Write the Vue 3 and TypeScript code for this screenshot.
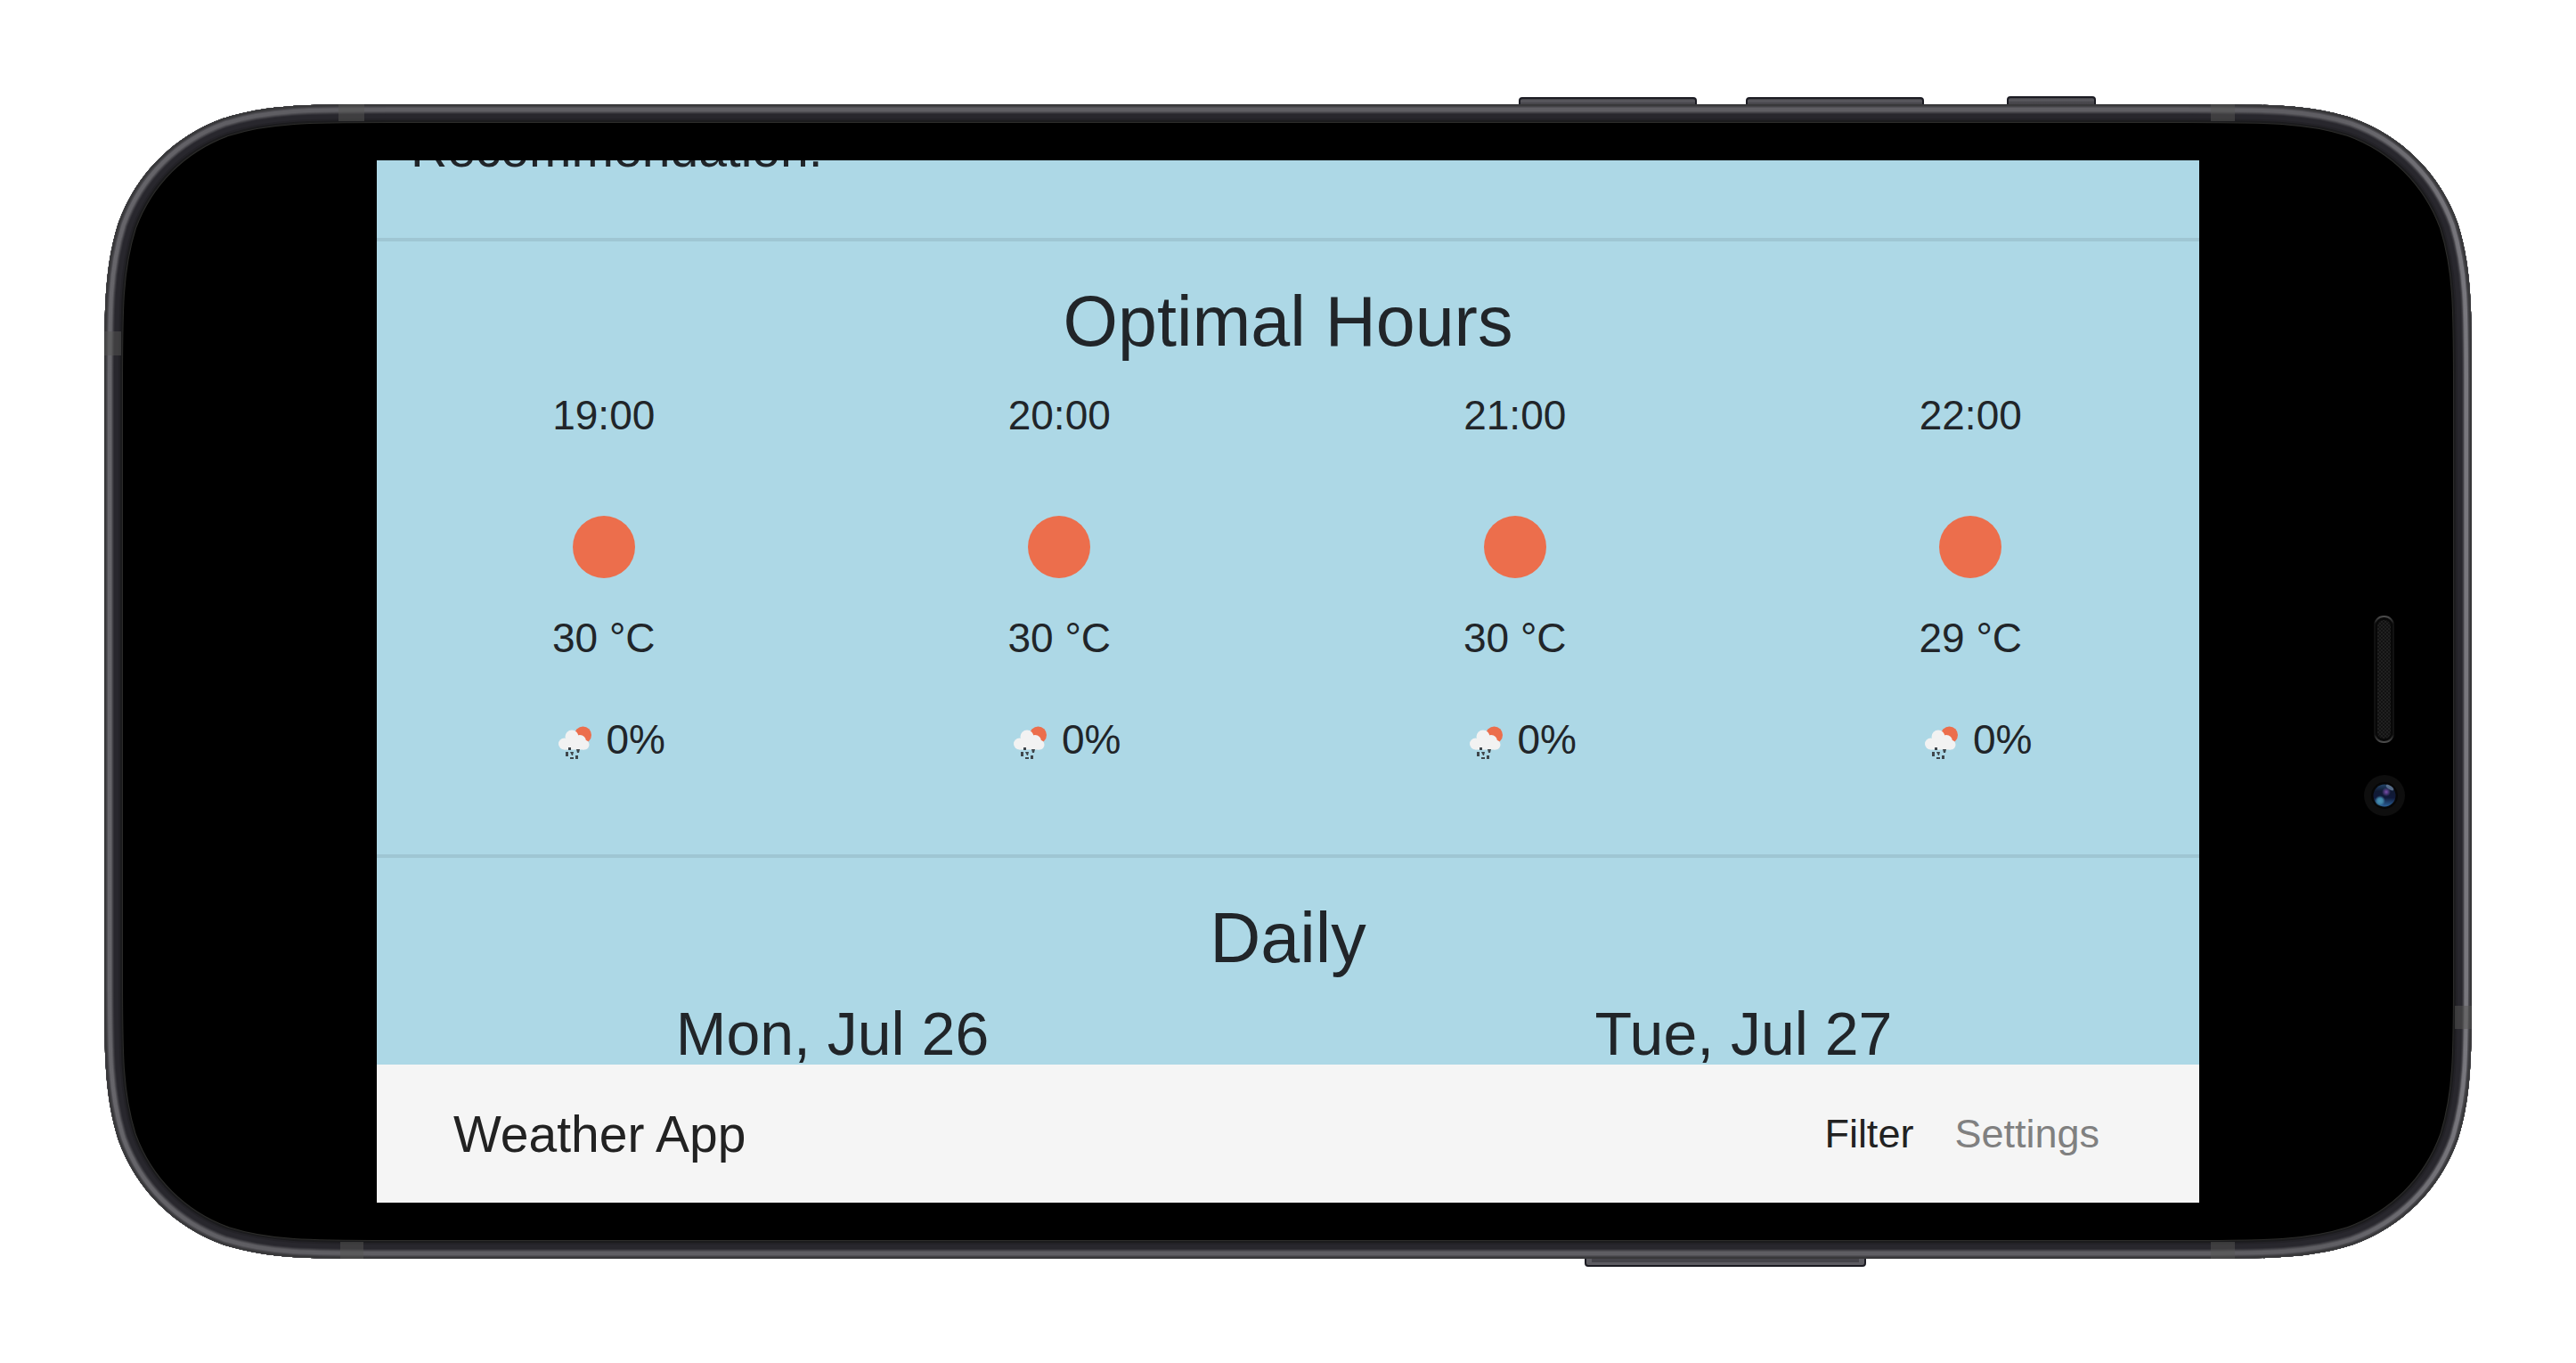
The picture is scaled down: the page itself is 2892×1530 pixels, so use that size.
<script setup lang="ts">
interface Hour {
  time: string
  temperature: string
  rain: string
}

interface RimLayer {
  depth: number
  color: string
}

const hours: Hour[] = [
  { time: '19:00', temperature: '30 °C', rain: '0%' },
  { time: '20:00', temperature: '30 °C', rain: '0%' },
  { time: '21:00', temperature: '30 °C', rain: '0%' },
  { time: '22:00', temperature: '29 °C', rain: '0%' },
]

const days: string[] = ['Mon, Jul 26', 'Tue, Jul 27']

// Rim of the handset, from the innermost ring to the outer edge
const rim: RimLayer[] = [
  { depth: 21, color: '#2c2c2a' },
  { depth: 20, color: '#1b1b1d' },
  { depth: 18, color: '#232227' },
  { depth: 16, color: '#28272d' },
  { depth: 11, color: '#333238' },
  { depth: 10, color: '#434247' },
  { depth: 9, color: 'url(#rim-mid)' },
  { depth: 8, color: 'url(#rim-light)' },
  { depth: 4, color: '#515055' },
  { depth: 3, color: '#434246' },
  { depth: 2, color: '#38383a' },
]

// Rounded rectangle with continuous-curvature corners
function squircle(w: number, h: number, r: number): string {
  const k = [1.528, 1.088, 0.868, 0.631, 0.372, 0.169, 0.075].map((n) => Math.round(n * r))
  const [a, b, c, d, e, f, g] = k
  return [
    `M${a} 0H${w - a}`,
    `C${w - b} 0 ${w - c} 0 ${w - d} ${g}C${w - e} ${f} ${w - f} ${e} ${w - g} ${d}C${w} ${c} ${w} ${b} ${w} ${a}`,
    `V${h - a}`,
    `C${w} ${h - b} ${w} ${h - c} ${w - g} ${h - d}C${w - f} ${h - e} ${w - e} ${h - f} ${w - d} ${h - g}C${w - c} ${h} ${w - b} ${h} ${w - a} ${h}`,
    `H${a}`,
    `C${b} ${h} ${c} ${h} ${d} ${h - g}C${e} ${h - f} ${f} ${h - e} ${g} ${h - d}C0 ${h - c} 0 ${h - b} 0 ${h - a}`,
    `V${a}`,
    `C0 ${b} 0 ${c} ${g} ${d}C${f} ${e} ${e} ${f} ${d} ${g}C${c} 0 ${b} 0 ${a} 0Z`,
  ].join('')
}

const outline = squircle(2658, 1296, 211)
</script>

<template>
  <div class="stage">
    <div class="phone">
      <svg class="shell" viewBox="0 0 2658 1296" aria-hidden="true">
        <defs>
          <clipPath id="body-clip"><path :d="outline" /></clipPath>
          <linearGradient id="rim-light" gradientUnits="userSpaceOnUse" x1="0" y1="0" x2="2658" y2="0">
            <stop offset="0" stop-color="#67666b" />
            <stop offset="0.06" stop-color="#5f5e63" />
            <stop offset="0.94" stop-color="#5f5e63" />
            <stop offset="1" stop-color="#79787e" />
          </linearGradient>
          <linearGradient id="rim-mid" gradientUnits="userSpaceOnUse" x1="0" y1="0" x2="2658" y2="0">
            <stop offset="0" stop-color="#57565b" />
            <stop offset="0.06" stop-color="#525156" />
            <stop offset="0.94" stop-color="#525156" />
            <stop offset="1" stop-color="#66656b" />
          </linearGradient>
          <linearGradient id="key" x1="0" y1="0" x2="0" y2="1">
            <stop offset="0" stop-color="#2f2f33" />
            <stop offset="0.15" stop-color="#5d5c62" />
            <stop offset="0.3" stop-color="#48474c" />
            <stop offset="1" stop-color="#38373c" />
          </linearGradient>
          <pattern id="mesh" width="4" height="4" patternUnits="userSpaceOnUse">
            <rect width="4" height="4" fill="#121212" />
            <rect width="2" height="2" fill="#202020" />
            <rect x="2" y="2" width="2" height="2" fill="#202020" />
          </pattern>
          <linearGradient id="slot" x1="0" y1="0" x2="0" y2="1">
            <stop offset="0" stop-color="#4c4c4c" />
            <stop offset="0.06" stop-color="#111111" />
            <stop offset="0.94" stop-color="#111111" />
            <stop offset="1" stop-color="#4c4c4c" />
          </linearGradient>
          <linearGradient id="lens" x1="0" y1="0" x2="0" y2="1">
            <stop offset="0" stop-color="#234468" />
            <stop offset="0.3" stop-color="#101a33" />
            <stop offset="0.6" stop-color="#10193a" />
            <stop offset="1" stop-color="#2b639a" />
          </linearGradient>
          <radialGradient id="glow-violet">
            <stop offset="0" stop-color="#7a4fae" />
            <stop offset="1" stop-color="#7a4fae" stop-opacity="0" />
          </radialGradient>
          <radialGradient id="glow-cyan">
            <stop offset="0" stop-color="#4a93b4" />
            <stop offset="0.5" stop-color="#3f83a6" />
            <stop offset="1" stop-color="#3f83a6" stop-opacity="0" />
          </radialGradient>
        </defs>

        <g fill="url(#key)" stroke="#1b1b22" stroke-width="2">
          <rect x="1589" y="-7" width="198" height="20" rx="3" />
          <rect x="1844" y="-7" width="198" height="20" rx="3" />
          <rect x="2137" y="-8" width="98" height="20" rx="3" />
        </g>
        <g stroke="#1b1b22" stroke-width="2">
          <rect x="1663" y="1285" width="314" height="19" rx="3" fill="#5d5c62" />
          <rect x="1670" y="1290" width="300" height="10" fill="#45444a" stroke="none" />
        </g>

        <path :d="outline" fill="#000" />
        <g clip-path="url(#body-clip)">
          <path
            v-for="layer in rim"
            :key="layer.depth"
            :d="outline"
            fill="none"
            :stroke="layer.color"
            :stroke-width="layer.depth * 2"
          />
          <g fill="#555553" fill-opacity="0.5">
            <rect x="263" y="0" width="29" height="19" />
            <rect x="2365" y="0" width="27" height="19" />
            <rect x="265" y="1277" width="26" height="19" />
            <rect x="2365" y="1277" width="27" height="19" />
            <rect x="0" y="255" width="19" height="27" />
            <rect x="2639" y="1012" width="19" height="26" />
          </g>
        </g>

        <rect x="2549" y="575" width="21" height="141" rx="10" fill="#080808" stroke="url(#slot)" stroke-width="2" />
        <rect x="2552" y="579" width="15" height="133" rx="7" fill="url(#mesh)" />
        <circle cx="2560" cy="776" r="23" fill="#0e0e0e" />
        <circle cx="2560" cy="776" r="15" fill="#060606" />
        <circle cx="2560" cy="776" r="12.5" fill="url(#lens)" />
        <ellipse cx="2566" cy="767" rx="5" ry="2" transform="rotate(35 2566 767)" fill="#7d93b0" fill-opacity="0.6" />
        <circle cx="2562" cy="772" r="5" fill="url(#glow-violet)" />
        <circle cx="2555" cy="782" r="6" fill="url(#glow-cyan)" />
      </svg>

      <div class="screen">
        <main class="viewport">
          <div class="scrolled">
            <p class="recommendation">Recommendation:</p>

            <section class="panel">
              <h2>Optimal Hours</h2>
              <div class="hours">
                <article v-for="hour in hours" :key="hour.time" class="hour">
                  <p>{{ hour.time }}</p>
                  <svg class="sun" viewBox="0 0 70 70" role="img" aria-label="Clear sky">
                    <circle cx="35" cy="35" r="35" fill="#ec6e4c" />
                  </svg>
                  <p>{{ hour.temperature }}</p>
                  <p class="rain">
                    <svg class="rain-icon" viewBox="0 0 60 60" role="img" aria-label="Chance of rain">
                      <circle cx="45.500" cy="25" r="9.500" fill="#ec6e4c" />
                      <g fill="#f2f2f2">
                        <circle cx="24.500" cy="35" r="6.500" />
                        <circle cx="33" cy="27" r="7.500" />
                        <circle cx="42" cy="32" r="7" />
                        <circle cx="47" cy="36" r="5.500" />
                        <path d="M24 30h18l5 6v5.500H24.500z" />
                      </g>
                      <g fill="#3f464b">
                        <rect x="29" y="39" width="3" height="3" />
                        <rect x="26" y="44" width="3" height="5" />
                        <path d="M31 44h4l-1 4h-1z" />
                        <path d="M38 41h4l-1 4h-2z" />
                        <rect x="31" y="50" width="4" height="2" />
                        <rect x="37" y="48" width="3" height="4" />
                      </g>
                    </svg>
                    <span>{{ hour.rain }}</span>
                  </p>
                </article>
              </div>
            </section>

            <section class="panel">
              <h2>Daily</h2>
              <div class="days">
                <h3 v-for="day in days" :key="day">{{ day }}</h3>
              </div>
            </section>
          </div>
        </main>

        <nav class="navbar">
          <a class="brand" href="#">Weather App</a>
          <div class="links">
            <a class="link active" href="#filter">Filter</a>
            <a class="link" href="#settings">Settings</a>
          </div>
        </nav>
      </div>
    </div>
  </div>
</template>

<style>
body {
  margin: 0;
  background: #fff;
}
</style>

<style scoped>
.stage {
  box-sizing: border-box;
  padding: 117px;
  font-family: 'Liberation Sans', Arial, sans-serif;
  color: #212529;
}

.phone {
  position: relative;
  box-sizing: border-box;
  display: flex;
  aspect-ratio: 2658 / 1296;
  padding: 63px 306px;
}

.shell {
  position: absolute;
  inset: 0;
  width: 100%;
  height: 100%;
  overflow: visible;
}

.screen {
  position: relative;
  display: flex;
  flex: 1;
  flex-direction: column;
  min-width: 0;
  overflow: hidden;
  background: #add8e6;
}

.viewport {
  flex: 1;
  min-height: 0;
  overflow: hidden;
}

/* The page is scrolled so that the first line is cut by the top edge */
.scrolled {
  margin-top: -55px;
}

p,
h2,
h3 {
  margin: 0;
  font-weight: 400;
  text-align: center;
}

p {
  font-size: 46px;
  line-height: 70px;
}

h2 {
  font-size: 79px;
  line-height: 96px;
}

h3 {
  flex: 1;
  font-size: 68px;
  line-height: 82px;
}

.recommendation {
  padding: 0 38px 58px;
  font-size: 57px;
  line-height: 84px;
  text-align: left;
}

.panel {
  padding-top: 42px;
  border-top: 4px solid #9fc6d3;
}

.hours {
  display: flex;
  padding: 22px 0 94px;
}

.hour {
  display: flex;
  flex: 1;
  flex-direction: column;
  align-items: center;
  padding-right: 2px;
}

.sun {
  width: 70px;
  height: 70px;
  margin: 78px 0 32px;
}

.rain {
  display: flex;
  align-items: center;
  gap: 12px;
  margin-top: 44px;
}

.rain-icon {
  width: 60px;
  height: 60px;
}

.days {
  display: flex;
  padding-top: 18px;
}

.navbar {
  display: flex;
  align-items: center;
  justify-content: space-between;
  height: 155px;
  padding: 0 112px 0 86px;
  background: #f5f5f5;
}

.links {
  display: flex;
  gap: 46px;
}

a {
  color: #222;
  text-decoration: none;
}

.brand {
  font-size: 57px;
  line-height: 84px;
}

.link {
  font-size: 45px;
  line-height: 70px;
  color: #808080;
}

.link.active {
  color: #222;
}
</style>
